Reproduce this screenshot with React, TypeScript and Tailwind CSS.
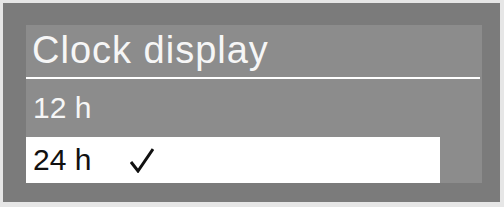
import React from 'react';

const FONT = { fontFamily: '"Liberation Sans", Arial, sans-serif' };

function Check() {
  return (
    <svg width="24" height="25" viewBox="0 0 24 25" className="ml-[39px]">
      <path d="M1 14 L8 23 L23 1" fill="none" stroke="#111" strokeWidth="3" strokeLinejoin="miter" />
    </svg>
  );
}

export default function App() {
  return (
    <div className="w-[504px] h-[207px] bg-[#e6e6e6] pt-[3px] pl-[3px]" style={FONT}>
      <div className="w-[497px] h-[199px] bg-[#7b7b7b] pt-[22px] pl-[23px]">
        <div className="w-[456px] h-[158px] bg-[#8c8c8c] flex flex-col">
          <div className="h-[52px] pt-[6px] pl-[6px] text-[38px] leading-[38px] tracking-[1px] text-[#f6f6f6]">
            Clock display
          </div>
          <div className="h-[2px] mr-[2px] bg-white" />
          <div className="h-[58px] flex items-center pl-[7px] text-[30px] leading-[30px] text-[#f6f6f6]">
            12 h
          </div>
          <div className="h-[46px] w-[414px] bg-white flex items-center pl-[7px] text-[30px] leading-[30px] text-[#111]">
            <span>24 h</span>
            <Check />
          </div>
        </div>
      </div>
    </div>
  );
}
